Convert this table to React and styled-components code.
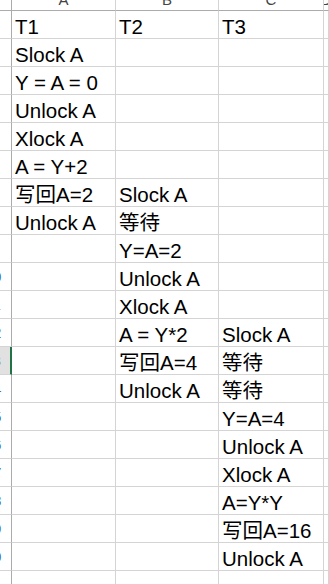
import React from 'react'
import styled, { createGlobalStyle } from 'styled-components'

const GlobalStyle = createGlobalStyle`
    html, body {
        margin: 0;
        padding: 0;
        background: #ffffff;
        overflow: hidden;
    }
`

const Sheet = styled.div`
    display: grid;
    grid-template-columns: 12px 104px 103px 105px 1fr;
    grid-auto-rows: 28px;
    grid-template-rows: 11px;
    width: 329px;
    height: 584px;
    overflow: hidden;
    font-family: "Liberation Sans", "Noto Sans CJK SC", sans-serif;
`

const Corner = styled.div`
    background: #ffffff;
    border-right: 1px solid #ababab;
    border-bottom: 1px solid #ababab;
`

const ColHead = styled.div`
    display: flex;
    justify-content: center;
    align-items: flex-end;
    overflow: hidden;
    background: #ffffff;
    border-right: 1px solid #d4d4d4;
    border-bottom: 1px solid #ababab;
    color: #444444;
    font-size: 15px;
    line-height: 15px;
    span {
        margin-bottom: 3px;
    }
`

const RowHead = styled.div`
    display: flex;
    justify-content: flex-end;
    align-items: center;
    overflow: hidden;
    background: ${p => (p.active ? '#e1e1e1' : '#ffffff')};
    border-right: ${p => (p.active ? '2px solid #217346' : '1px solid #ababab')};
    border-bottom: 1px solid #d4d4d4;
    color: #3a6fb0;
    font-size: 15px;
    span {
        flex-shrink: 0;
        width: ${p => (p.active ? '35px' : '36px')};
        text-align: center;
    }
`

const Cell = styled.div`
    display: flex;
    align-items: flex-end;
    padding: 0 0 1px 3px;
    border-right: 1px solid #d4d4d4;
    border-bottom: 1px solid #d4d4d4;
    color: #000000;
    font-size: 20.5px;
    line-height: 20px;
    white-space: nowrap;
    overflow: visible;
`

const rows = [
    ['T1', 'T2', 'T3'],
    ['Slock A', '', ''],
    ['Y = A = 0', '', ''],
    ['Unlock A', '', ''],
    ['Xlock A', '', ''],
    ['A = Y+2', '', ''],
    ['写回A=2', 'Slock A', ''],
    ['Unlock A', '等待', ''],
    ['', 'Y=A=2', ''],
    ['', 'Unlock A', ''],
    ['', 'Xlock A', ''],
    ['', 'A = Y*2', 'Slock A'],
    ['', '写回A=4', '等待'],
    ['', 'Unlock A', '等待'],
    ['', '', 'Y=A=4'],
    ['', '', 'Unlock A'],
    ['', '', 'Xlock A'],
    ['', '', 'A=Y*Y'],
    ['', '', '写回A=16'],
    ['', '', 'Unlock A'],
    ['', '', ''],
]

const App = () => {
    return (
        <>
            <GlobalStyle />
            <Sheet>
                <Corner />
                {['A', 'B', 'C', 'D'].map(l => (
                    <ColHead key={l}><span>{l}</span></ColHead>
                ))}
                {rows.map((r, i) => (
                    <React.Fragment key={i}>
                        <RowHead active={i === 12}><span>{i + 1}</span></RowHead>
                        {r.map((t, j) => (
                            <Cell key={j}>{t}</Cell>
                        ))}
                        <Cell />
                    </React.Fragment>
                ))}
            </Sheet>
        </>
    )
}

export default App
